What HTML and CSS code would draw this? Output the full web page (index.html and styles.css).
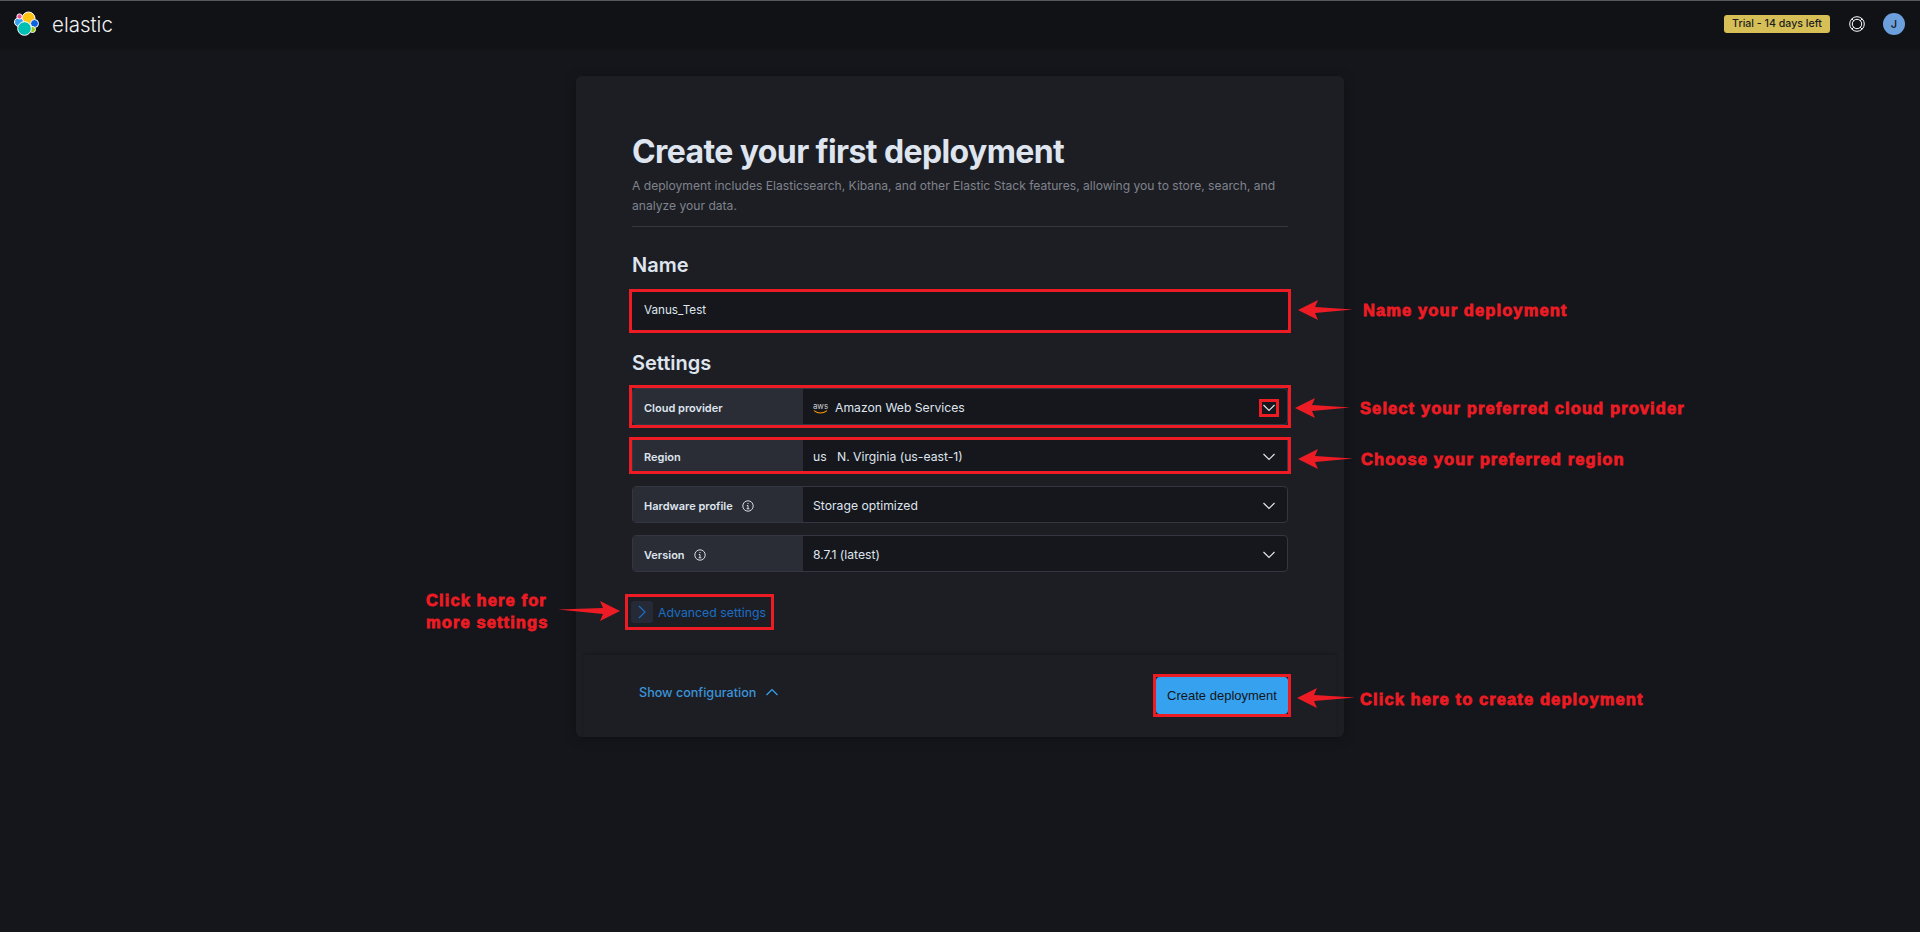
FILE: index.html
```html
<!DOCTYPE html>
<html>
    <head>
        <title>Create your first deployment</title>
        <link rel="stylesheet" href="styles.css">
    </head>
    <body>
        <header class="topbar">
            <div class="brand">
                <svg class="brand-logo" width="26" height="26" viewBox="0 0 26 26">
                    <circle cx="15.500" cy="7.500" r="6.500" fill="#fec514" stroke="#fff"/>
                    <circle cx="6" cy="11" r="4.500" fill="#36a2ef" stroke="#fff"/>
                    <circle cx="21.500" cy="12.500" r="4" fill="#0b64dd" stroke="#fff"/>
                    <circle cx="6.500" cy="5.500" r="2.600" fill="#f04e98" stroke="#fff"/>
                    <circle cx="19.500" cy="18.500" r="3" fill="#93c90e" stroke="#fff"/>
                    <circle cx="11.500" cy="17.500" r="6.800" fill="#00bfb3" stroke="#fff"/>
                </svg>
                <span class="brand-name">elastic</span>
            </div>
            <div class="spacer"></div>
            <span class="trial">Trial - 14 days left</span>
            <svg class="help" width="16" height="16" viewBox="0 0 16 16" fill="none" stroke="#fff">
                <circle cx="8" cy="8" r="7.300"/>
                <circle cx="8" cy="8" r="4.700"/>
                <path d="M2.800 2.800l2 2M13.200 2.800l-2 2M2.800 13.200l2-2M13.200 13.200l-2-2"/>
            </svg>
            <span class="avatar">J</span>
        </header>

        <main class="page">
            <section class="card">
                <div class="card-body">
                    <h1>Create your first deployment</h1>
                    <p class="lead">A deployment includes Elasticsearch, Kibana, and other Elastic Stack features, allowing you to store, search, and analyze your data.</p>
                    <hr>
                    <h2 class="name-title">Name</h2>
                    <div class="marked name-mark">
                        <div class="name-input">Vanus_Test</div>
                    </div>
                    <h2 class="settings-title">Settings</h2>
                    <div class="rows">
                        <div class="marked">
                            <div class="row">
                                <div class="row-label">Cloud provider</div>
                                <div class="row-value">
                                    <span class="aws"><span class="aws-text">aws</span><svg width="15" height="4" viewBox="0 0 15 4" fill="none"><path d="M1 .6c4 3 9 3 13 0" stroke="#f90" stroke-width="1.100"/></svg></span>
                                    Amazon Web Services
                                    <span class="chevron-box">
                                        <svg width="14" height="8" viewBox="0 0 14 8" fill="none" stroke="#e4e6ea" stroke-width="1.200"><path d="M1.500 1l5.500 5.500 5.500-5.500"/></svg>
                                    </span>
                                </div>
                            </div>
                        </div>
                        <div class="region-mark">
                            <div class="row">
                                <div class="row-label">Region</div>
                                <div class="row-value">
                                    <span class="flag">us</span>
                                    N. Virginia (us-east-1)
                                    <span class="chevron">
                                        <svg width="14" height="8" viewBox="0 0 14 8" fill="none" stroke="#e4e6ea" stroke-width="1.200"><path d="M1.500 1l5.500 5.500 5.500-5.500"/></svg>
                                    </span>
                                </div>
                            </div>
                        </div>
                        <div class="row">
                            <div class="row-label">Hardware profile
                                <svg class="info" width="12" height="12" viewBox="0 0 12 12" fill="none" stroke="#d7dae0"><circle cx="6" cy="6" r="5.200"/><path d="M4.800 5.500H6v3.200M4.600 8.800h2.800M6 3v1"/></svg>
                            </div>
                            <div class="row-value">
                                Storage optimized
                                <span class="chevron">
                                    <svg width="14" height="8" viewBox="0 0 14 8" fill="none" stroke="#e4e6ea" stroke-width="1.200"><path d="M1.500 1l5.500 5.500 5.500-5.500"/></svg>
                                </span>
                            </div>
                        </div>
                        <div class="row">
                            <div class="row-label">Version
                                <svg class="info" width="12" height="12" viewBox="0 0 12 12" fill="none" stroke="#d7dae0"><circle cx="6" cy="6" r="5.200"/><path d="M4.800 5.500H6v3.200M4.600 8.800h2.800M6 3v1"/></svg>
                            </div>
                            <div class="row-value">
                                8.7.1 (latest)
                                <span class="chevron">
                                    <svg width="14" height="8" viewBox="0 0 14 8" fill="none" stroke="#e4e6ea" stroke-width="1.200"><path d="M1.500 1l5.500 5.500 5.500-5.500"/></svg>
                                </span>
                            </div>
                        </div>
                    </div>
                    <div class="advanced marked">
                        <span class="advanced-icon">
                            <svg width="8" height="14" viewBox="0 0 8 14" fill="none" stroke="#1a6fc4" stroke-width="1.200"><path d="M1 1l6 6-6 6"/></svg>
                        </span>
                        Advanced settings
                    </div>
                </div>
                <footer class="card-footer">
                    <span class="show-config">Show configuration
                        <svg width="14" height="8" viewBox="0 0 14 8" fill="none" stroke="#36a2ef" stroke-width="1.200"><path d="M1.500 7l5.500-5.500 5.500 5.500"/></svg>
                    </span>
                    <div class="spacer"></div>
                    <div class="marked create-mark">
                        <button class="create">Create deployment</button>
                    </div>
                </footer>
            </section>
        </main>

        <!-- red notes drawn on top of the screenshot -->
        <svg class="arrow arrow-name" width="55" height="20" viewBox="0 0 55 20"><path d="M0 10L20 0l-3 7 38 2.500-38 3.500 3 7z"/></svg>
        <div class="note note-name">Name your deployment</div>
        <svg class="arrow arrow-cloud" width="55" height="20" viewBox="0 0 55 20"><path d="M0 10L20 0l-3 7 38 2.500-38 3.500 3 7z"/></svg>
        <div class="note note-cloud">Select your preferred cloud provider</div>
        <svg class="arrow arrow-region" width="55" height="20" viewBox="0 0 55 20"><path d="M0 10L20 0l-3 7 38 2.500-38 3.500 3 7z"/></svg>
        <div class="note note-region">Choose your preferred region</div>
        <svg class="arrow arrow-advanced" width="62" height="20" viewBox="0 0 62 20"><path d="M62 10L42 0l3 7-45 1.500 45 4.500-3 7z"/></svg>
        <div class="note note-advanced">Click here for<br>more settings</div>
        <svg class="arrow arrow-create" width="58" height="20" viewBox="0 0 58 20"><path d="M0 10L20 0l-3 7 41 2.500-41 3.500 3 7z"/></svg>
        <div class="note note-create">Click here to create deployment</div>
    </body>
</html>
```

FILE: styles.css
```css
* {
    box-sizing: border-box;
}
html, body {
    height: 100%;
}
body {
    margin: 0;
    background: #15161b;
    color: #dfe5ef;
    font-family: Inter, "Noto Sans", sans-serif;
    overflow: hidden;
}
.spacer {
    flex-grow: 1;
}
.topbar {
    height: 47px;
    display: flex;
    align-items: center;
    padding: 0 15px;
    background: #111216;
    border-top: 1px solid #56585e;
    box-shadow: 0 2px 3px rgba(0, 0, 0, 0.25);
}
.brand {
    display: flex;
    align-items: center;
    gap: 13px;
}
.brand-logo {
    margin-left: -2px;
}
.brand-name {
    font-size: 20.500px;
    font-weight: 300;
    color: #f0f1f3;
}
.trial {
    width: 106px;
    height: 18px;
    line-height: 18px;
    text-align: center;
    border-radius: 3px;
    background: #d6bf57;
    color: #1b1c20;
    font-size: 10.600px;
    font-weight: 500;
    white-space: nowrap;
}
.help {
    margin-left: 19px;
}
.avatar {
    width: 22px;
    height: 22px;
    margin-left: 18px;
    border-radius: 50%;
    background: #6ca0dc;
    color: #14151a;
    font-size: 11px;
    font-weight: 500;
    line-height: 22px;
    text-align: center;
}
.page {
    display: flex;
    justify-content: center;
    padding-top: 29px;
}
.card {
    width: 768px;
    height: 661px;
    display: flex;
    flex-direction: column;
    background: #1d1e24;
    border-radius: 6px;
    box-shadow: 0 2px 12px rgba(0, 0, 0, 0.3);
}
.card-body {
    flex-grow: 1;
    padding: 56px 56px 0;
}
h1 {
    margin: 0;
    font-size: 32px;
    line-height: 40px;
    font-weight: 700;
    letter-spacing: -0.600px;
    color: #dfe5ef;
}
.lead {
    margin: 4px 0 0;
    font-size: 12.100px;
    line-height: 19.500px;
    color: #7f838c;
}
hr {
    margin: 11px 0 0;
    border: 0;
    border-top: 1px solid #343741;
}
h2 {
    margin: 0;
    font-size: 20px;
    line-height: 28px;
    font-weight: 600;
}
.name-title {
    margin-top: 24px;
}
.marked {
    outline: 3px solid #ed1c24;
}
.name-mark {
    margin-top: 13px;
}
.name-input {
    height: 38px;
    padding-left: 12px;
    line-height: 37px;
    font-size: 11.700px;
    background: #16171c;
    border-radius: 4px;
}
.settings-title {
    margin-top: 19px;
}
.rows {
    margin-top: 11px;
    display: flex;
    flex-direction: column;
    gap: 12px;
}
.row {
    height: 37px;
    display: flex;
    border: 1px solid #343741;
    border-radius: 4px;
    overflow: hidden;
    background: #16171c;
}
.region-mark {
    position: relative;
}
.region-mark::after {
    content: "";
    position: absolute;
    inset: 0 -3px;
    border: 3px solid #ed1c24;
}
.row-label {
    width: 170px;
    flex-shrink: 0;
    display: flex;
    align-items: center;
    gap: 9px;
    padding: 2px 0 0 11px;
    background: #2a2d35;
    font-size: 11px;
    font-weight: 600;
}
.row-value {
    flex-grow: 1;
    display: flex;
    align-items: center;
    padding: 2px 0 0 10px;
    font-size: 12.200px;
}
.aws {
    width: 15px;
    margin-right: 7px;
    display: flex;
    flex-direction: column;
    align-items: center;
    color: #c9ccd2;
}
.aws-text {
    font-size: 8px;
    line-height: 8px;
}
.flag {
    width: 24px;
}
.chevron, .chevron-box {
    margin-left: auto;
    margin-right: 11px;
    display: flex;
}
.chevron-box {
    width: 20px;
    height: 18px;
    margin-right: 8px;
    align-items: center;
    justify-content: center;
    outline: 3px solid #ed1c24;
    outline-offset: -3px;
}
.advanced {
    width: fit-content;
    height: 30px;
    margin: 25px 0 0 -4px;
    padding: 0 5px 0 3px;
    display: flex;
    align-items: center;
    gap: 5px;
    font-size: 12.300px;
    color: #1a6fc4;
}
.advanced-icon {
    width: 22px;
    height: 22px;
    display: flex;
    align-items: center;
    justify-content: center;
    background: #252a36;
    border-radius: 3px;
}
.card-footer {
    height: 82px;
    margin: 0 8px;
    padding: 0 48px 8px;
    display: flex;
    align-items: center;
    box-shadow: 0 -2px 3px rgba(0, 0, 0, 0.2);
}
.show-config {
    margin-left: 7px;
    display: flex;
    align-items: center;
    gap: 9px;
    font-size: 12.600px;
    font-weight: 500;
    color: #3b94d9;
}
.create-mark {
    margin-top: 6px;
}
.create {
    display: block;
    width: 132px;
    height: 37px;
    padding: 0;
    border: 0;
    border-radius: 4px;
    background: #36a2ef;
    color: #14151a;
    font-family: "Liberation Sans", sans-serif;
    font-size: 13px;
}
.arrow {
    position: absolute;
    fill: #ed1c24;
}
.arrow-name { left: 1298px; top: 300px; }
.arrow-cloud { left: 1295px; top: 398px; }
.arrow-region { left: 1298px; top: 449px; }
.arrow-advanced { left: 558px; top: 601px; }
.arrow-create { left: 1297px; top: 688px; }
.note {
    position: absolute;
    color: #ed1c24;
    font-family: "Liberation Sans", sans-serif;
    font-size: 16.500px;
    font-weight: 700;
    line-height: 22px;
    letter-spacing: 1.100px;
    -webkit-text-stroke: 0.800px #ed1c24;
    white-space: nowrap;
}
.note-name { left: 1363px; top: 299px; }
.note-cloud { left: 1360px; top: 397px; }
.note-region { left: 1361px; top: 448px; }
.note-advanced { left: 426px; top: 589px; }
.note-create { left: 1360px; top: 688px; }
```
